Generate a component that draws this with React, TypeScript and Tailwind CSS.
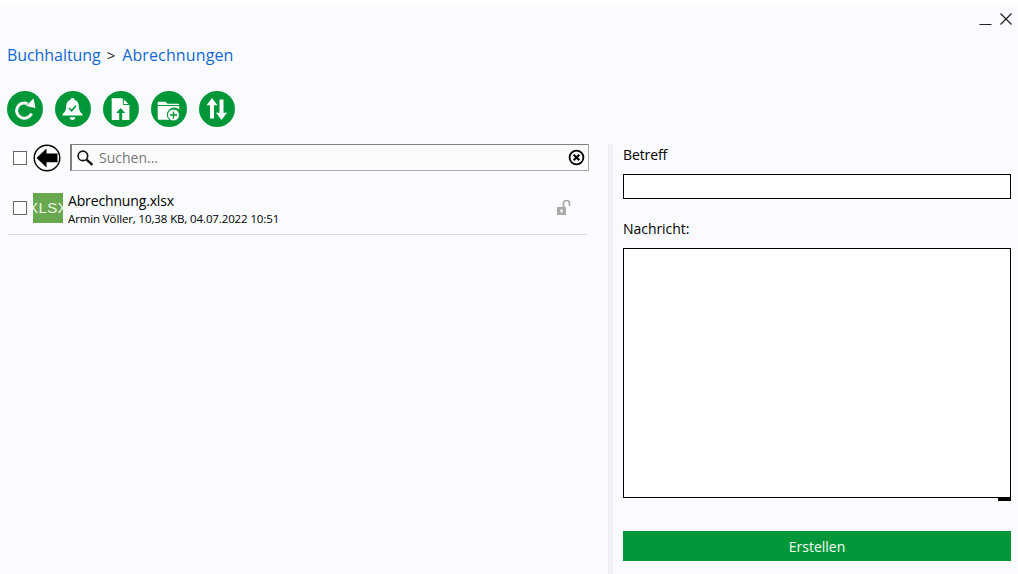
import React from "react";

function Round({ children }: { children: React.ReactNode }) {
  return (
    <div className="w-[36px] h-[36px] rounded-full bg-[#009739] flex items-center justify-center">
      <svg width="36" height="36" viewBox="0 0 36 36">{children}</svg>
    </div>
  );
}

function Check({ className = "" }: { className?: string }) {
  return <div className={"w-[14px] h-[14px] border border-[#666] bg-[#fdfdfd] shrink-0 " + className} />;
}

export default function App() {
  return (
    <div className="w-[1018px] h-[574px] overflow-hidden bg-white font-['Open_Sans','Noto_Sans',sans-serif] text-[14px] text-black">
      <div className="mt-[4px] h-[570px] bg-[#fafbfe] flex flex-col">
        <div className="h-[38px] flex justify-end items-start pr-[5px] pt-[8px] gap-[7px]">
          <svg width="13" height="14" viewBox="0 0 13 14">
            <path d="M0.5 12.500H12.500" stroke="#222" strokeWidth="1" />
          </svg>
          <svg width="14" height="14" viewBox="0 0 14 14">
            <path d="M1.500 1.500L12.500 12.500M12.500 1.500L1.500 12.500" stroke="#222" strokeWidth="1.300" />
          </svg>
        </div>
        <div className="h-[26px] pl-[7px] flex items-center text-[16px] leading-[26px]">
          <span className="text-[#1268d0] tracking-[-0.07px]">Buchhaltung</span>
          <span className="ml-[6px] mr-[7px] text-[#222] text-[15px]">&gt;</span>
          <span className="text-[#1268d0] tracking-[0.12px]">Abrechnungen</span>
        </div>
        <div className="mt-[23px] pl-[7px] flex gap-[12px]">
          <Round>
            <path d="M24.500 22.500A7.700 7.700 0 1 1 20.500 12.600" fill="none" stroke="#fff" strokeWidth="3" />
            <path d="M26.500 7.500L28.500 17L19 15Z" fill="#fff" />
          </Round>
          <Round>
            <path d="M17.500 7c1.200 0 2 .7 2 1.700 3 .9 4.300 3.500 4.300 6.800 0 3.500 1.500 5.700 3.700 7.800v1.200h-20v-1.200c2.200-2.100 3.700-4.300 3.700-7.800 0-3.300 1.300-5.900 4.300-6.800 0-1 .8-1.700 2-1.700z" fill="#fff" />
            <path d="M14.800 26.200h5.400a2.700 2.700 0 0 1-5.400 0z" fill="#fff" />
            <path d="M14 17l2.600 2.700 4.400-5" fill="none" stroke="#009739" strokeWidth="1.600" />
          </Round>
          <Round>
            <path d="M8.700 7.300h11l6.700 6.700v15h-17.700z" fill="#fff" />
            <path d="M20.300 7v6.500H26.800" fill="none" stroke="#009739" strokeWidth="1" />
            <path d="M17.700 17l4.500 5h-3v7h-3v-7h-3z" fill="#009739" />
          </Round>
          <Round>
            <path d="M6.700 12.200c0-1 .7-1.500 1.500-1.500h6.300l2 2H27c.7 0 1.200.5 1.200 1.300H6.700z" fill="#fff" />
            <path d="M6.700 15h21.500v3.500a7 7 0 0 0-10 10.200H8.200c-.8 0-1.500-.6-1.500-1.500z" fill="#fff" />
            <circle cx="22.500" cy="24" r="6" fill="#fff" stroke="#009739" strokeWidth="1" />
            <path d="M22.500 20.500v7M19 24h7" stroke="#009739" strokeWidth="1.500" />
          </Round>
          <Round>
            <path d="M13 7l5.500 7.200H15v13.300h-4V14.200H7.500z" fill="#fff" />
            <path d="M22.500 29L17 21.800h3.500V8.500h4v13.300H28z" fill="#fff" />
          </Round>
        </div>
        <div className="flex flex-1 mt-[17px]">
          <div className="w-[608px] pl-[8px] pr-[19px] flex flex-col">
            <div className="flex items-center h-[27px] pl-[5px]">
              <Check />
              <svg width="28" height="28" viewBox="0 0 28 28" className="ml-[6px] shrink-0">
                <circle cx="14" cy="14" r="12.800" fill="#fff" stroke="#000" strokeWidth="1.400" />
                <path d="M3.500 14L13.500 4.500V9.500H24.500V18.300H13.500V23.500Z" fill="#000" />
              </svg>
              <div className="ml-[9px] flex-1 h-[27px] border-t-[1.500px] border-l-2 border-r border-b border-t-[#808080] border-l-[#808080] border-r-[#a8a8a8] border-b-[#a8a8a8] bg-[#fcfcfd] flex items-center pl-[4px] pr-[3px]">
                <svg width="18" height="18" viewBox="0 0 17 17">
                  <circle cx="6.500" cy="6.500" r="4.500" fill="none" stroke="#111" strokeWidth="1.600" />
                  <path d="M10 10l5.500 5" stroke="#111" strokeWidth="2.200" />
                </svg>
                <span className="ml-[5px] text-[14px] text-[#777] flex-1 leading-none">Suchen...</span>
                <svg width="17" height="17" viewBox="0 0 16 16">
                  <circle cx="8" cy="8" r="6.500" fill="none" stroke="#000" strokeWidth="1.700" />
                  <path d="M5.300 5.300l5.400 5.400M10.700 5.300l-5.400 5.400" stroke="#000" strokeWidth="2" />
                </svg>
              </div>
            </div>
            <div className="mt-[22px] mr-[2px] h-[42px] border-b border-[#dcdcdc] flex items-start pl-[5px] relative">
              <Check className="mt-[8px]" />
              <div className="ml-[6px] w-[30px] h-[30px] bg-[#6aa84f] overflow-hidden flex items-center justify-center text-[#eef6ea] text-[15px] font-['Liberation_Sans'] shrink-0 whitespace-nowrap">
                <span className="tracking-[0.4px]">XLSX</span>
              </div>
              <div className="ml-[5px] flex flex-col -mt-[1px] flex-1">
                <span className="text-[14px] leading-[18px] tracking-[-0.15px]">Abrechnung.xlsx</span>
                <span className="text-[11.500px] leading-[16px] mt-[1px] tracking-[-0.12px]">Armin Völler, 10,38 KB, 04.07.2022 10:51</span>
              </div>
              <svg width="16" height="16" viewBox="0 0 16 16" className="mr-[15px] mt-[7px]">
                <rect x="1" y="7" width="9" height="8" fill="#a9a9a9" />
                <rect x="4.500" y="9.500" width="2" height="3" fill="#fff" />
                <path d="M7.500 7V3.500a3 3 0 0 1 6 0V6" fill="none" stroke="#a9a9a9" strokeWidth="1.700" />
              </svg>
            </div>
          </div>
          <div className="w-[5px] bg-[#eef0f2]" />
          <div className="w-[388px] ml-[10px] flex flex-col">
            <div className="h-[22px] leading-[22px] tracking-[-0.1px]">Betreff</div>
            <div className="mt-[8px] h-[25px] border border-black bg-white" />
            <div className="mt-[19px] h-[22px] leading-[22px] tracking-[-0.05px]">Nachricht:</div>
            <div className="mt-[8px] h-[250px] border border-black bg-white relative">
              <div className="absolute right-[-1px] top-[248px] w-[13px] h-[4px] bg-black" />
            </div>
            <button className="mt-[33px] h-[30px] bg-[#009739] text-[#f4fbf6] text-[14px]">Erstellen</button>
          </div>
        </div>
      </div>
    </div>
  );
}
